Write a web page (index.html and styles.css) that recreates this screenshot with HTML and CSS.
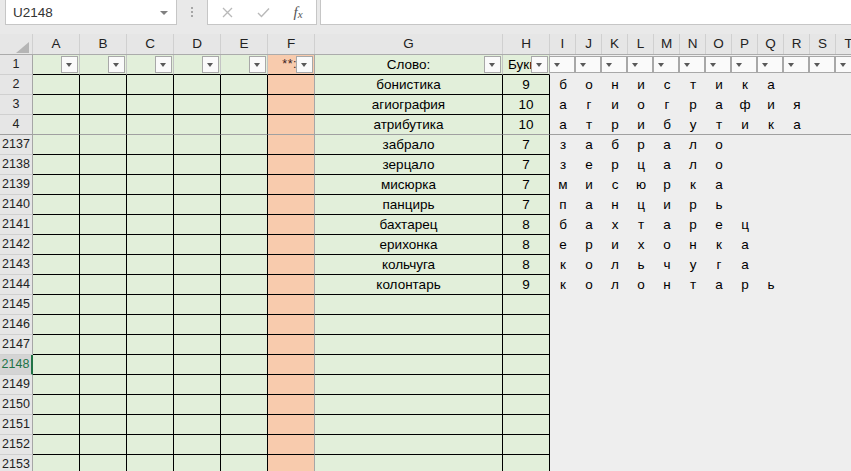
FILE: index.html
```html
<!DOCTYPE html>
<html lang="ru">
<head>
<meta charset="utf-8">
<title>Excel</title>
<link rel="stylesheet" href="styles.css">
</head>
<body>
<div class="fbar">
  <div class="namebox">U2148<span class="nb-arrow"></span></div>
  <div class="grip"><i></i><i></i><i></i></div>
  <div class="fxbtns">
    <span class="b1"><svg width="11" height="11" viewBox="0 0 11 11"><path d="M1 1L10 10M10 1L1 10" stroke="#b9b9b9" stroke-width="1.3" fill="none"/></svg></span>
    <span class="b2"><svg width="13" height="11" viewBox="0 0 13 11"><path d="M1 6L4.5 9.5L12 1.5" stroke="#b9b9b9" stroke-width="1.4" fill="none"/></svg></span>
    <span class="b3"><i class="fxf">f</i><i class="fxx">x</i></span>
  </div>
  <div class="finput"></div>
</div>

<div class="hdr">
  <div class="corner"><svg width="13" height="11" viewBox="0 0 13 11"><polygon points="13,0 13,11 0,11" fill="#b5b5b5"/></svg></div>
  <div class="ch">A</div><div class="ch">B</div><div class="ch">C</div><div class="ch">D</div><div class="ch">E</div><div class="ch">F</div>
  <div class="ch">G</div><div class="ch">H</div>
  <div class="ch">I</div><div class="ch">J</div><div class="ch">K</div><div class="ch">L</div><div class="ch">M</div><div class="ch">N</div>
  <div class="ch">O</div><div class="ch">P</div><div class="ch">Q</div><div class="ch">R</div><div class="ch">S</div><div class="ch">T</div>
</div>

<div class="row flt">
  <div class="rh">1</div>
  <div class="c"><span class="dd"></span></div>
  <div class="c"><span class="dd"></span></div>
  <div class="c"><span class="dd"></span></div>
  <div class="c"><span class="dd"></span></div>
  <div class="c"><span class="dd"></span></div>
  <div class="c f ftxt">**:<span class="dd"></span></div>
  <div class="c">Слово:<span class="dd"></span></div>
  <div class="c htxt">Букв<span class="dd"></span></div>
  <div class="letters">
    <span class="fc"><span class="dd"></span></span><span class="fc"><span class="dd"></span></span><span class="fc"><span class="dd"></span></span>
    <span class="fc"><span class="dd"></span></span><span class="fc"><span class="dd"></span></span><span class="fc"><span class="dd"></span></span>
    <span class="fc"><span class="dd"></span></span><span class="fc"><span class="dd"></span></span><span class="fc"><span class="dd"></span></span>
    <span class="fc"><span class="rd"></span><span class="dd"></span></span><span class="fc"><span class="rd"></span><span class="dd"></span></span><span class="fc"><span class="rd"></span><span class="dd"></span></span>
  </div>
</div>

<div class="row">
  <div class="rh">2</div><div class="c"></div><div class="c"></div><div class="c"></div><div class="c"></div><div class="c"></div><div class="c f"></div>
  <div class="c">бонистика</div><div class="c">9</div>
  <div class="letters"><span>б</span><span>о</span><span>н</span><span>и</span><span>с</span><span>т</span><span>и</span><span>к</span><span>а</span></div>
</div>
<div class="row">
  <div class="rh">3</div><div class="c"></div><div class="c"></div><div class="c"></div><div class="c"></div><div class="c"></div><div class="c f"></div>
  <div class="c">агиография</div><div class="c">10</div>
  <div class="letters"><span>а</span><span>г</span><span>и</span><span>о</span><span>г</span><span>р</span><span>а</span><span>ф</span><span>и</span><span>я</span></div>
</div>
<div class="row hid">
  <div class="rh">4</div><div class="c"></div><div class="c"></div><div class="c"></div><div class="c"></div><div class="c"></div><div class="c f"></div>
  <div class="c">атрибутика</div><div class="c">10</div>
  <div class="letters"><span>а</span><span>т</span><span>р</span><span>и</span><span>б</span><span>у</span><span>т</span><span>и</span><span>к</span><span>а</span></div>
</div>
<div class="row">
  <div class="rh">2137</div><div class="c"></div><div class="c"></div><div class="c"></div><div class="c"></div><div class="c"></div><div class="c f"></div>
  <div class="c">забрало</div><div class="c">7</div>
  <div class="letters"><span>з</span><span>а</span><span>б</span><span>р</span><span>а</span><span>л</span><span>о</span></div>
</div>
<div class="row">
  <div class="rh">2138</div><div class="c"></div><div class="c"></div><div class="c"></div><div class="c"></div><div class="c"></div><div class="c f"></div>
  <div class="c">зерцало</div><div class="c">7</div>
  <div class="letters"><span>з</span><span>е</span><span>р</span><span>ц</span><span>а</span><span>л</span><span>о</span></div>
</div>
<div class="row">
  <div class="rh">2139</div><div class="c"></div><div class="c"></div><div class="c"></div><div class="c"></div><div class="c"></div><div class="c f"></div>
  <div class="c">мисюрка</div><div class="c">7</div>
  <div class="letters"><span>м</span><span>и</span><span>с</span><span>ю</span><span>р</span><span>к</span><span>а</span></div>
</div>
<div class="row">
  <div class="rh">2140</div><div class="c"></div><div class="c"></div><div class="c"></div><div class="c"></div><div class="c"></div><div class="c f"></div>
  <div class="c">панцирь</div><div class="c">7</div>
  <div class="letters"><span>п</span><span>а</span><span>н</span><span>ц</span><span>и</span><span>р</span><span>ь</span></div>
</div>
<div class="row">
  <div class="rh">2141</div><div class="c"></div><div class="c"></div><div class="c"></div><div class="c"></div><div class="c"></div><div class="c f"></div>
  <div class="c">бахтарец</div><div class="c">8</div>
  <div class="letters"><span>б</span><span>а</span><span>х</span><span>т</span><span>а</span><span>р</span><span>е</span><span>ц</span></div>
</div>
<div class="row">
  <div class="rh">2142</div><div class="c"></div><div class="c"></div><div class="c"></div><div class="c"></div><div class="c"></div><div class="c f"></div>
  <div class="c">ерихонка</div><div class="c">8</div>
  <div class="letters"><span>е</span><span>р</span><span>и</span><span>х</span><span>о</span><span>н</span><span>к</span><span>а</span></div>
</div>
<div class="row">
  <div class="rh">2143</div><div class="c"></div><div class="c"></div><div class="c"></div><div class="c"></div><div class="c"></div><div class="c f"></div>
  <div class="c">кольчуга</div><div class="c">8</div>
  <div class="letters"><span>к</span><span>о</span><span>л</span><span>ь</span><span>ч</span><span>у</span><span>г</span><span>а</span></div>
</div>
<div class="row">
  <div class="rh">2144</div><div class="c"></div><div class="c"></div><div class="c"></div><div class="c"></div><div class="c"></div><div class="c f"></div>
  <div class="c">колонтарь</div><div class="c">9</div>
  <div class="letters"><span>к</span><span>о</span><span>л</span><span>о</span><span>н</span><span>т</span><span>а</span><span>р</span><span>ь</span></div>
</div>
<div class="row">
  <div class="rh">2145</div><div class="c"></div><div class="c"></div><div class="c"></div><div class="c"></div><div class="c"></div><div class="c f"></div><div class="c"></div><div class="c"></div><div class="letters"></div>
</div>
<div class="row">
  <div class="rh">2146</div><div class="c"></div><div class="c"></div><div class="c"></div><div class="c"></div><div class="c"></div><div class="c f"></div><div class="c"></div><div class="c"></div><div class="letters"></div>
</div>
<div class="row">
  <div class="rh">2147</div><div class="c"></div><div class="c"></div><div class="c"></div><div class="c"></div><div class="c"></div><div class="c f"></div><div class="c"></div><div class="c"></div><div class="letters"></div>
</div>
<div class="row">
  <div class="rh sel">2148</div><div class="c"></div><div class="c"></div><div class="c"></div><div class="c"></div><div class="c"></div><div class="c f"></div><div class="c"></div><div class="c"></div><div class="letters"></div>
</div>
<div class="row">
  <div class="rh">2149</div><div class="c"></div><div class="c"></div><div class="c"></div><div class="c"></div><div class="c"></div><div class="c f"></div><div class="c"></div><div class="c"></div><div class="letters"></div>
</div>
<div class="row">
  <div class="rh">2150</div><div class="c"></div><div class="c"></div><div class="c"></div><div class="c"></div><div class="c"></div><div class="c f"></div><div class="c"></div><div class="c"></div><div class="letters"></div>
</div>
<div class="row">
  <div class="rh">2151</div><div class="c"></div><div class="c"></div><div class="c"></div><div class="c"></div><div class="c"></div><div class="c f"></div><div class="c"></div><div class="c"></div><div class="letters"></div>
</div>
<div class="row">
  <div class="rh">2152</div><div class="c"></div><div class="c"></div><div class="c"></div><div class="c"></div><div class="c"></div><div class="c f"></div><div class="c"></div><div class="c"></div><div class="letters"></div>
</div>
<div class="row">
  <div class="rh">2153</div><div class="c"></div><div class="c"></div><div class="c"></div><div class="c"></div><div class="c"></div><div class="c f"></div><div class="c"></div><div class="c"></div><div class="letters"></div>
</div>
</body>
</html>
```
FILE: styles.css
```css
* { box-sizing: border-box; }
html, body { margin: 0; padding: 0; }
body {
  width: 851px;
  height: 471px;
  overflow: hidden;
  background: #eeeeee;
  font-family: "Liberation Sans", Arial, sans-serif;
  color: #000;
}

/* formula bar */
.fbar {
  display: flex;
  align-items: flex-start;
  height: 34px;
  background: #e9e9e9;
}
.namebox {
  position: relative;
  margin-left: 5px;
  width: 172px;
  height: 25px;
  background: #fff;
  border: 1px solid #c6c6c6;
  border-top: 0;
  display: flex;
  align-items: center;
  padding-left: 7px;
  font-size: 13.5px;
  color: #333;
}
.nb-arrow {
  position: absolute;
  right: 8px;
  top: 11px;
  width: 0;
  height: 0;
  border-left: 4px solid transparent;
  border-right: 4px solid transparent;
  border-top: 4px solid #808080;
}
.grip {
  width: 30px;
  height: 25px;
  display: flex;
  flex-direction: column;
  align-items: center;
  gap: 2px;
  padding-top: 7px;
}
.grip i {
  width: 2px;
  height: 2px;
  background: #a6a6a6;
}
.fxbtns {
  display: flex;
  width: 110px;
  height: 25px;
  background: #fff;
  border: 1px solid #c6c6c6;
  border-top: 0;
}
.fxbtns span {
  display: flex;
  align-items: center;
  justify-content: center;
  height: 24px;
}
.b1 { width: 39px; }
.b2 { width: 33px; }
.b3 { width: 36px; }
.fxf, .fxx {
  font-family: "Liberation Serif", "Times New Roman", serif;
  font-style: italic;
  color: #555;
}
.fxf { font-size: 15px; }
.fxx { font-size: 11px; margin-top: 4px; }
.finput {
  flex: 1;
  margin-left: 3px;
  height: 25px;
  background: #fff;
  border-left: 1px solid #c6c6c6;
  border-bottom: 1px solid #c6c6c6;
}

/* column headers */
.hdr {
  display: grid;
  grid-template-columns: 33px repeat(6, 47px) 188px 47px repeat(12, 26px);
  height: 21px;
  background: #e6e6e6;
  border-bottom: 1px solid #ababab;
}
.corner {
  display: flex;
  align-items: flex-end;
  justify-content: flex-end;
  padding: 0 3px 1px 0;
  border-right: 1px solid #d0d0d0;
}
.ch {
  border-right: 1px solid #d0d0d0;
  text-align: center;
  font-size: 13.5px;
  line-height: 20px;
  color: #222;
}

/* rows */
.row {
  display: grid;
  grid-template-columns: 33px repeat(6, 47px) 188px 47px 1fr;
  height: 20px;
}
.rh {
  background: #e6e6e6;
  border-right: 1px solid #a6a6a6;
  border-bottom: 1px solid #d0d0d0;
  text-align: center;
  font-size: 12.5px;
  line-height: 19px;
  color: #222;
}
.rh.sel {
  background: #d4d4d4;
  color: #217346;
  border-right: 2px solid #217346;
}
.c {
  position: relative;
  background: #e2efda;
  border-right: 1px solid #000;
  border-bottom: 1px solid #000;
  text-align: center;
  font-size: 13.5px;
  line-height: 19px;
  white-space: nowrap;
  overflow: hidden;
}
.c.f {
  background: #f8cbad;
  border-right-color: #a6a6a6;
}
.letters {
  display: flex;
  border-bottom: 1px solid transparent;
}
.letters span {
  width: 26px;
  flex: none;
  text-align: center;
  font-size: 13.5px;
  line-height: 19px;
}
.row.hid > * {
  border-bottom-color: #a0a0a0;
}

/* filter row */
.flt .c { border-right-color: #c4c4c4; }
.flt .c.f { border-right-color: #a6a6a6; }
.ftxt {
  text-align: right;
  padding-right: 17px;
  font-size: 12.5px;
  letter-spacing: 0.5px;
  color: #3a2020;
}
.htxt {
  text-align: left;
  padding-left: 5px;
}
.letters .fc {
  position: relative;
  height: 19px;
}
.dd {
  position: absolute;
  right: 1px;
  top: 1px;
  width: 17px;
  height: 17px;
  background: #fafafa;
  border: 1px solid #a8a8a8;
}
.dd::after {
  content: "";
  position: absolute;
  left: 4px;
  top: 6px;
  width: 0;
  height: 0;
  border-left: 3.5px solid transparent;
  border-right: 3.5px solid transparent;
  border-top: 4px solid #595959;
}
.rd {
  position: absolute;
  left: 6px;
  top: 3px;
  height: 12px;
  border-left: 1px dotted #c00000;
}
```
